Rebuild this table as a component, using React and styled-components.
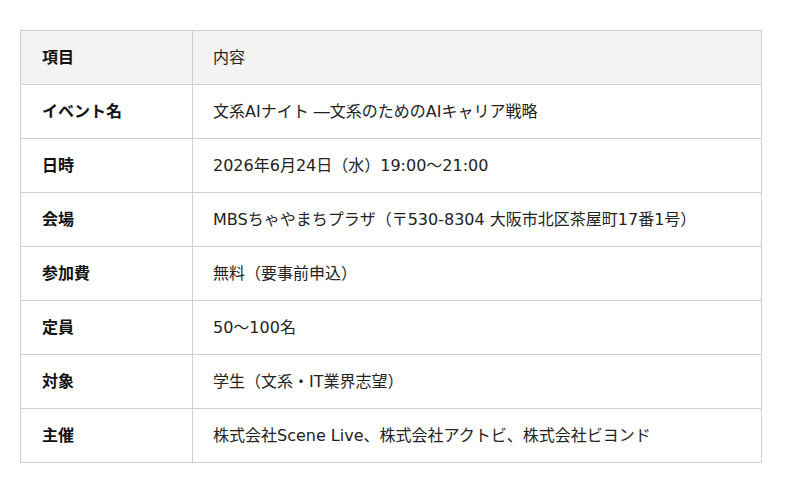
import styled, { createGlobalStyle } from "styled-components";

const GlobalStyle = createGlobalStyle`
  body {
    margin: 0;
    background: #fff;
    font-family: "DejaVu Sans", "Noto Sans CJK JP", sans-serif;
    color: #222;
  }
`;

const Wrapper = styled.div`
  padding: 30px 38px 30px 20px;
`;

const Table = styled.table`
  width: 742px;
  border-collapse: collapse;
  font-family: "DejaVu Sans", "Noto Sans CJK JP", sans-serif;
  font-size: 16px;
`;

const Row = styled.tr`
  height: 54px;
  background: ${(p) => (p.head ? "#f3f3f3" : "#fff")};
`;

const Label = styled.th`
  width: 172px;
  box-sizing: border-box;
  padding: 0 20px 4px 21px;
  border: 1px solid #cfcfcf;
  text-align: left;
  font-weight: bold;
  color: #111;
`;

const Value = styled.td`
  padding: 0 20px 4px;
  border: 1px solid #cfcfcf;
  color: #222;
`;

const rows = [
  ["イベント名", "文系AIナイト ―文系のためのAIキャリア戦略"],
  ["日時", "2026年6月24日（水）19:00〜21:00"],
  ["会場", "MBSちゃやまちプラザ（〒530-8304 大阪市北区茶屋町17番1号）"],
  ["参加費", "無料（要事前申込）"],
  ["定員", "50〜100名"],
  ["対象", "学生（文系・IT業界志望）"],
  ["主催", "株式会社Scene Live、株式会社アクトビ、株式会社ビヨンド"],
];

function App() {
  return (
    <Wrapper>
      <GlobalStyle />
      <Table>
        <tbody>
          <Row head>
            <Label>項目</Label>
            <Value>内容</Value>
          </Row>
          {rows.map(([k, v]) => (
            <Row key={k}>
              <Label>{k}</Label>
              <Value>{v}</Value>
            </Row>
          ))}
        </tbody>
      </Table>
    </Wrapper>
  );
}

export default App;
